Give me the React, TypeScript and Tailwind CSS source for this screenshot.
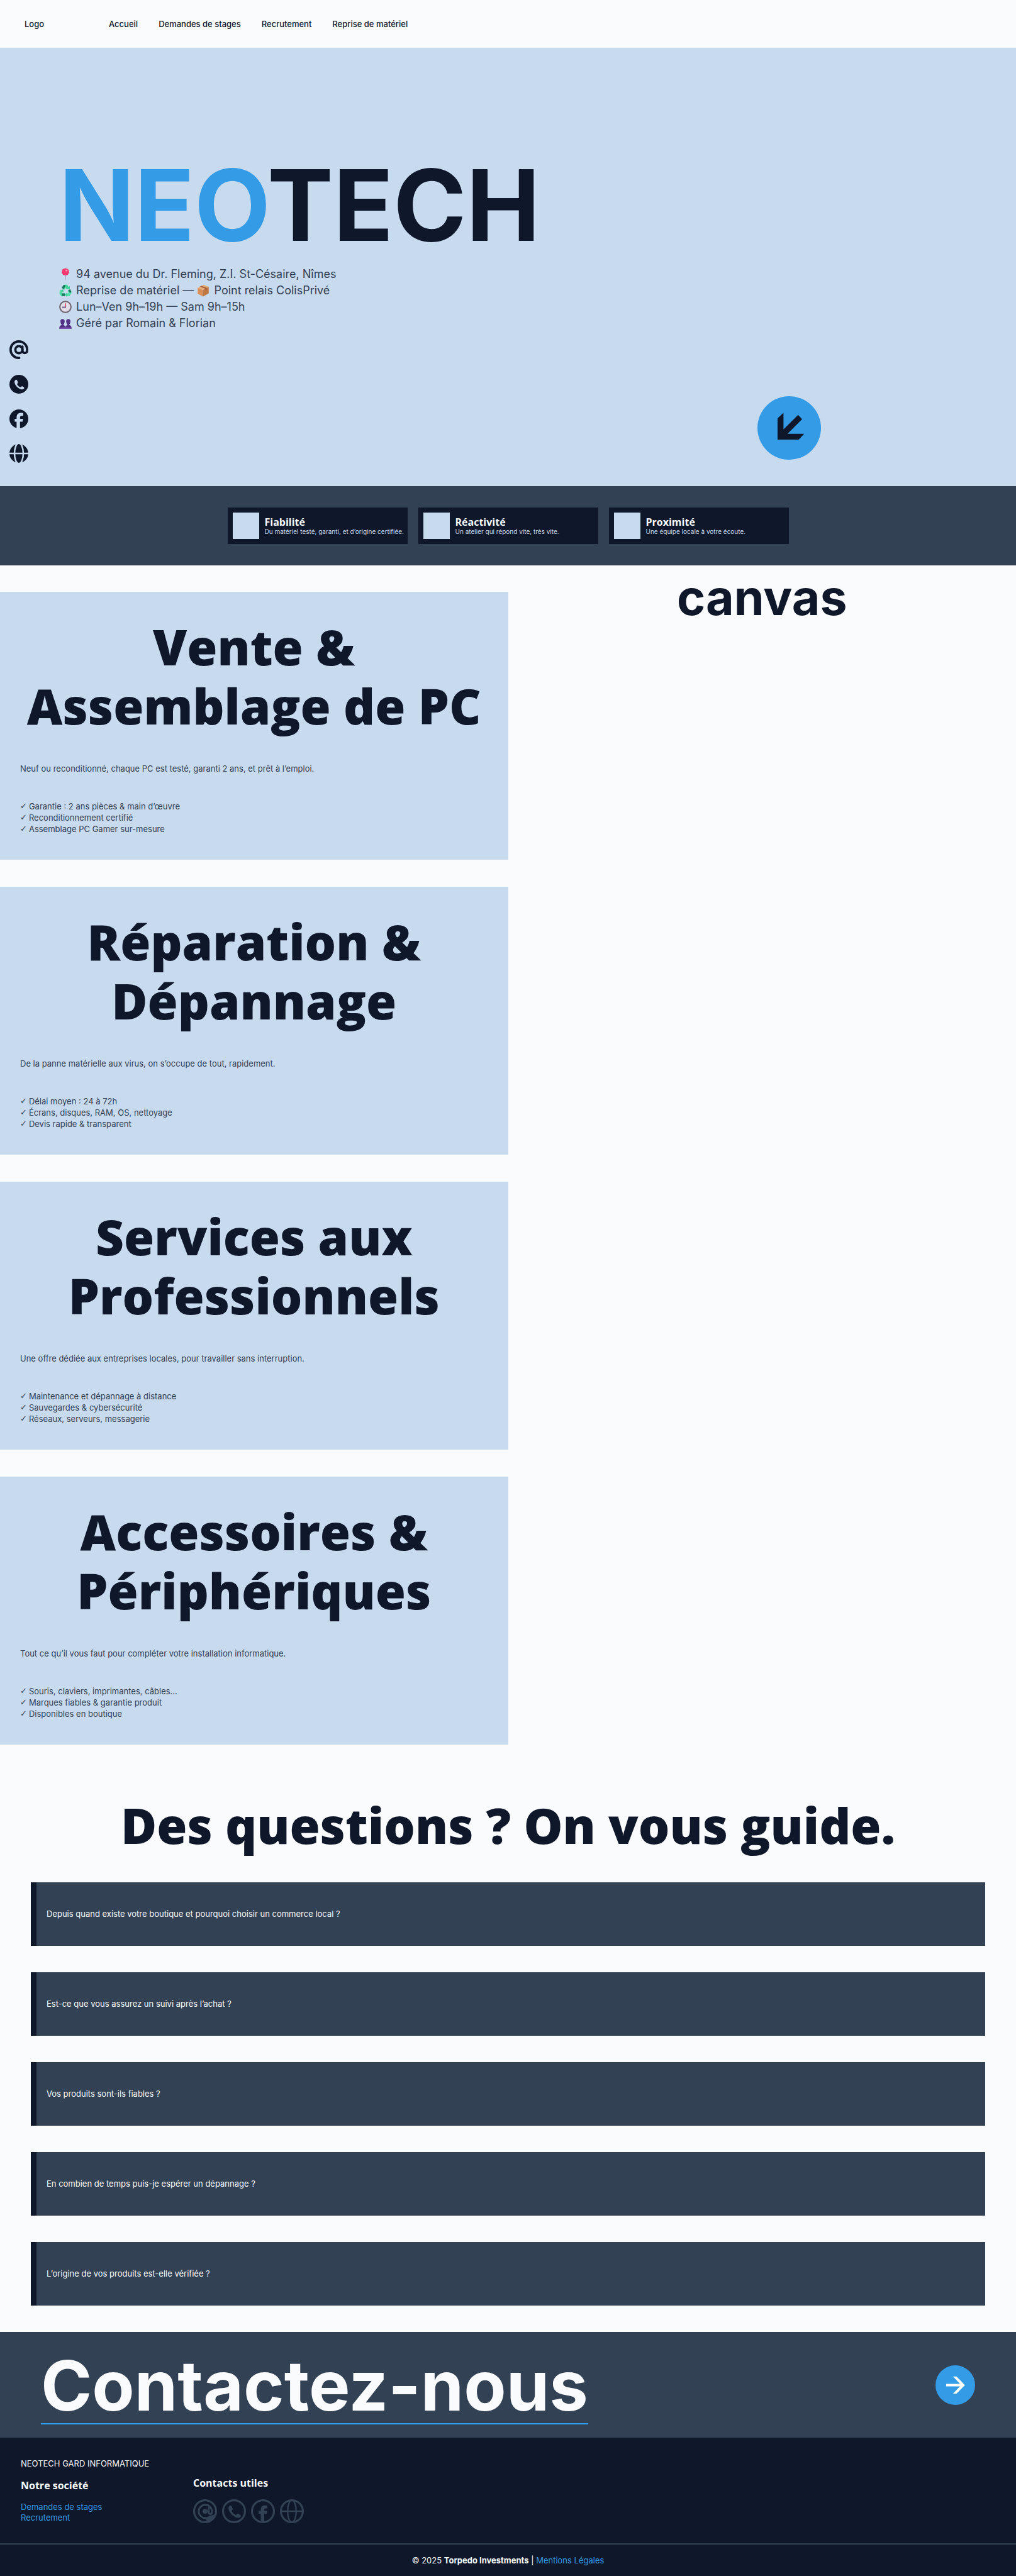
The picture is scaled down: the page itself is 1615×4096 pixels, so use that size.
import React from "react";
import { FaFacebook } from "react-icons/fa6";

const HANDSET =
  "M7.6 6.5c.9-.5 1.9-.1 2.3.9l.7 1.7c.3.8 0 1.4-.5 1.9-.5.6-.4 1.1 0 1.7.8 1.2 1.9 2.2 3.2 2.8.6.3 1.1.2 1.5-.3.5-.6 1.2-.8 2-.4l1.2.7c.9.5 1 1.6.3 2.3-1.2 1.1-3 1.1-4.9.2-3.2-1.5-5.6-4.1-6.7-7.4-.5-1.7-.3-3.2.9-4.1z";

/* ---------- solid contact icons (hero) ---------- */

function AtSolid() {
  return (
    <svg viewBox="0 0 24 24" className="size-full" fill="none" stroke="currentColor" strokeWidth="3" strokeLinecap="round" strokeLinejoin="round">
      <circle cx="12" cy="12" r="4.5" />
      <path d="M16.5 8v5.2a3 3 0 0 0 6 0V12A10.5 10.5 0 1 0 12.4 22.5" />
    </svg>
  );
}

function PhoneSolid() {
  return (
    <svg viewBox="0 0 24 24" className="size-full">
      <circle cx="12" cy="12" r="12" fill="currentColor" />
      <path d={HANDSET} fill="#c8daee" />
    </svg>
  );
}

function GlobeSolid() {
  return (
    <svg viewBox="0 0 24 24" className="size-full">
      <circle cx="12" cy="12" r="12" fill="currentColor" />
      <g fill="none" stroke="#c8daee" strokeWidth="2">
        <path d="M0 12h24" />
        <ellipse cx="12" cy="12" rx="5.6" ry="13" />
      </g>
    </svg>
  );
}

/* ---------- outlined contact icons (footer) ---------- */

function AtOutline() {
  return (
    <svg viewBox="0 0 24 24" className="size-full" fill="none" stroke="currentColor" strokeLinecap="round">
      <circle cx="12" cy="12" r="11" strokeWidth="2" />
      <circle cx="12" cy="12" r="2.5" fill="currentColor" stroke="none" />
      <path d="M15.6 8.6v4.6a1.6 1.6 0 0 0 3.2 0V12A6.6 6.6 0 1 0 12 18.8" strokeWidth="1.9" />
      <path d="M11.5 18.4c2.4.4 3.9-.9 5.3-1.6 1.6-.3 3.2-.7 4.7-1.3-1 3.900-4.200 7-8.500 7.500.7-.8 1.200-1.600.3-2.300z" fill="currentColor" strokeWidth="0.5" />
    </svg>
  );
}

function PhoneOutline() {
  return (
    <svg viewBox="0 0 24 24" className="size-full">
      <circle cx="12" cy="12" r="11" fill="none" stroke="currentColor" strokeWidth="2" />
      <path d={HANDSET} fill="currentColor" />
    </svg>
  );
}

function FacebookOutline() {
  return (
    <svg viewBox="0 0 24 24" className="size-full">
      <circle cx="12" cy="12" r="11" fill="none" stroke="currentColor" strokeWidth="2" />
      <path d="M9.800 23v-8.300H7.600v-3.200h2.200V10.200c0-2.700 1.500-4.100 4.100-4.100.9 0 1.800.1 2.600.2v2.800h-1.600c-1.200 0-1.600.6-1.600 1.500v.9h3.100l-.5 3.200h-2.600V23z" fill="currentColor" />
    </svg>
  );
}

function GlobeOutline() {
  return (
    <svg viewBox="0 0 24 24" className="size-full" fill="none" stroke="currentColor">
      <circle cx="12" cy="12" r="11" strokeWidth="2" />
      <ellipse cx="12" cy="12" rx="4.300" ry="11" strokeWidth="1.500" />
      <path d="M1 12h22" strokeWidth="1.600" />
    </svg>
  );
}

/* ---------- pictograms in the address lines ---------- */

const PICTO = "mr-0.5 inline-block size-5 align-[-4px]";

function Pin() {
  return (
    <svg viewBox="0 0 24 24" className={PICTO} role="img" aria-label="Adresse">
      <path d="M11.300 12h1.400l-.3 11.500h-.8z" fill="#9a93a8" />
      <circle cx="12" cy="7.500" r="7" fill="#f3376f" />
      <ellipse cx="14" cy="4.800" rx="2" ry="1.800" fill="#ff9dbb" />
    </svg>
  );
}

function Recycle() {
  return (
    <svg viewBox="0 0 24 24" className={PICTO} role="img" aria-label="Recyclage">
      <g strokeWidth="5" fill="none">
        <path d="M8 9l3-5.500h3l2.500 4" stroke="#3dd598" />
        <path d="M19 12l2 4-2.500 4H14" stroke="#4fe0a5" />
        <path d="M10.500 20H5l-2-3.500L5 12.500" stroke="#4fe0a5" />
      </g>
      <path d="M8 1.500l4 .2-3 8-4-2.700z M17 11l4-1.500 2.600 5-3 2z M5 17.500h6v5H5.500z" fill="#1f7a63" />
      <path d="M12.500 8.500l7.500 1 .5-6z M14.500 16v8l-3.500-4z M1 12l7-2.500.5 6z" fill="#3dd598" />
    </svg>
  );
}

function Parcel() {
  return (
    <svg viewBox="0 0 24 24" className={PICTO} role="img" aria-label="Colis">
      <path d="M1.500 6.500L13 .8l9.500 4L11.500 11z" fill="#e8ae78" />
      <path d="M1.500 6.500l10 4.500v12.500l-10-5.500z" fill="#d98f58" />
      <path d="M22.500 4.800v12.700l-11 6V11z" fill="#c07845" />
      <path d="M5.500 4.500l11 4.200v4l2.500-1.300V7L8.500 3z" fill="#a85f38" />
    </svg>
  );
}

function Clock() {
  return (
    <svg viewBox="0 0 24 24" className={PICTO} role="img" aria-label="Horaires">
      <circle cx="12" cy="12" r="10.600" fill="#e2dde8" stroke="#6e6671" strokeWidth="2.500" />
      <path d="M12.300 12.500V5" stroke="#f0335f" strokeWidth="1.700" />
      <path d="M13 12.500H6" stroke="#43306b" strokeWidth="1.700" />
    </svg>
  );
}

function People() {
  return (
    <svg viewBox="0 0 24 24" className={PICTO} role="img" aria-label="Équipe">
      <g fill="#533187">
        <path d="M2.600 9.500C2 5.800 3.800 4 6.500 4s4.500 1.800 3.900 5.500c-.3 2.300-1 3.800-1.900 4.500v1.500c2 .6 3.500 2 3.500 4.500v2.500H.5V20c0-2.500 1.700-3.900 4-4.500V14c-1-.7-1.600-2.200-1.900-4.500z" />
        <path d="M13.600 9.500C13 5.800 14.800 4 17.500 4s4.500 1.800 3.900 5.500c-.3 2.300-1 3.800-1.900 4.500v1.500c2.300.6 4 2 4 4.500v2.500H12V20c0-2.500 1.500-3.900 3.500-4.500V14c-1-.7-1.600-2.200-1.900-4.500z" />
      </g>
      <path d="M.5 22.500v-1.300c3-1.700 20-1.700 23 0v1.300z" fill="#7a4fae" />
    </svg>
  );
}

/* ---------- content ---------- */

const NAV = ["Accueil", "Demandes de stages", "Recrutement", "Reprise de matériel"];

const HERO_CONTACTS = [
  { label: "E-mail", icon: <AtSolid /> },
  { label: "Téléphone", icon: <PhoneSolid /> },
  { label: "Facebook", icon: <FaFacebook className="size-full" /> },
  { label: "Site web", icon: <GlobeSolid /> },
];

const FOOTER_CONTACTS = [
  { label: "E-mail", icon: <AtOutline /> },
  { label: "Téléphone", icon: <PhoneOutline /> },
  { label: "Facebook", icon: <FacebookOutline /> },
  { label: "Site web", icon: <GlobeOutline /> },
];

const VALUES = [
  { title: "Fiabilité", text: "Du matériel testé, garanti, et d’origine certifiée." },
  { title: "Réactivité", text: "Un atelier qui répond vite, très vite." },
  { title: "Proximité", text: "Une équipe locale à votre écoute." },
];

const SERVICES = [
  {
    title: "Vente & Assemblage de PC",
    text: "Neuf ou reconditionné, chaque PC est testé, garanti 2 ans, et prêt à l’emploi.",
    items: ["Garantie : 2 ans pièces & main d’œuvre", "Reconditionnement certifié", "Assemblage PC Gamer sur-mesure"],
  },
  {
    title: "Réparation & Dépannage",
    text: "De la panne matérielle aux virus, on s’occupe de tout, rapidement.",
    items: ["Délai moyen : 24 à 72h", "Écrans, disques, RAM, OS, nettoyage", "Devis rapide & transparent"],
  },
  {
    title: "Services aux Professionnels",
    text: "Une offre dédiée aux entreprises locales, pour travailler sans interruption.",
    items: ["Maintenance et dépannage à distance", "Sauvegardes & cybersécurité", "Réseaux, serveurs, messagerie"],
  },
  {
    title: "Accessoires & Périphériques",
    text: "Tout ce qu’il vous faut pour compléter votre installation informatique.",
    items: ["Souris, claviers, imprimantes, câbles…", "Marques fiables & garantie produit", "Disponibles en boutique"],
  },
];

const QUESTIONS = [
  "Depuis quand existe votre boutique et pourquoi choisir un commerce local ?",
  "Est-ce que vous assurez un suivi après l’achat ?",
  "Vos produits sont-ils fiables ?",
  "En combien de temps puis-je espérer un dépannage ?",
  "L’origine de vos produits est-elle vérifiée ?",
];

const HEADING = "text-center font-['Open_Sans',sans-serif] text-[78px] leading-[94px] font-extrabold";
const SMALL_HEADING = "font-['Open_Sans',sans-serif] text-base leading-5 font-bold";

export default function App() {
  return (
    <div className="bg-[#f9fbfd] font-['Inter',sans-serif] text-[13px] text-[#0f172a]">
      <header className="flex items-center px-[39px] py-7 leading-5 font-medium">
        <a href="#accueil" className="w-[134px]">Logo</a>
        <nav className="flex gap-[33px]">
          {NAV.map((n) => (
            <a key={n} href="#">{n}</a>
          ))}
        </nav>
      </header>

      <section className="relative bg-[#c8daee] px-[94px] pt-[174px] pb-[246px]">
        <h1 className="text-[157px] leading-[152px] font-bold">
          <span className="text-[#349be7]">NEO</span>TECH
        </h1>
        <div className="mt-[21px] text-lg leading-[26px] text-[#334155]">
          <p><Pin /> 94 avenue du Dr. Fleming, Z.I. St-Césaire, Nîmes</p>
          <p><Recycle /> Reprise de matériel — <Parcel /> Point relais ColisPrivé</p>
          <p><Clock /> Lun–Ven 9h–19h — Sam 9h–15h</p>
          <p><People /> Géré par Romain &amp; Florian</p>
        </div>
        <div className="absolute bottom-[37px] left-[15px] flex flex-col gap-[25px]">
          {HERO_CONTACTS.map((c) => (
            <a key={c.label} href="#" aria-label={c.label} className="size-[30px]">{c.icon}</a>
          ))}
        </div>
        <a href="#services" aria-label="Voir les services" className="absolute right-[310px] bottom-[42px] size-[101px] rounded-full bg-[#349be7]">
          <svg viewBox="0 0 120 120" className="size-full" fill="#0f172a">
            <path d="M38 42L49.200 31.300V62.700L76.700 35.300L84.500 43.300L56.900 71H88.200L78 82H38Z" />
          </svg>
        </a>
      </section>

      <section className="flex justify-center gap-[17px] bg-[#334155] py-[34px]">
        {VALUES.map((v) => (
          <article key={v.title} className="flex w-[286px] items-center gap-[9px] bg-[#0f172a] p-2">
            <div className="size-[42px] shrink-0 bg-[#c8daee]" />
            <div className="min-w-0">
              <h3 className="font-['Open_Sans',sans-serif] text-base leading-[18px] font-bold text-[#f9fbfd]">{v.title}</h3>
              <p className="text-[10px] leading-[13px] whitespace-nowrap text-[#c8daee]">{v.text}</p>
            </div>
          </article>
        ))}
      </section>

      <section id="services" className="grid grid-cols-2">
        <div className="flex flex-col gap-[43px] pt-[42px]">
          {SERVICES.map((s) => (
            <article key={s.title} className="bg-[#c8daee] px-8 pt-10 pb-10">
              <h2 className={HEADING}>{s.title}</h2>
              <p className="mt-11 leading-[18px] text-[#334155]">{s.text}</p>
              <ul className="mt-[42px] leading-[18px] text-[#334155]">
                {s.items.map((i) => (
                  <li key={i} className="flex gap-[3px]">
                    <span aria-hidden="true" className="font-['DejaVu_Sans',sans-serif] font-bold">✓</span>
                    {i}
                  </li>
                ))}
              </ul>
            </article>
          ))}
        </div>
        <div className="text-center text-[77px] leading-[102px] font-bold">canvas</div>
      </section>

      <section className="px-[49px] pt-[81px] pb-[42px]">
        <h2 className={HEADING}>Des questions ? On vous guide.</h2>
        <div className="mt-11 flex flex-col gap-[42px]">
          {QUESTIONS.map((q) => (
            <button key={q} type="button" className="w-full border-l-[9px] border-[#0f172a] bg-[#334155] py-[41px] pl-4 text-left leading-[19px] text-[#f9fbfd]">
              {q}
            </button>
          ))}
        </div>
      </section>

      <section className="flex items-center justify-between bg-[#334155] px-[65px] py-[21px]">
        <a href="#contact" className="border-b-2 border-[#349be7] pt-[9px] pb-[5px] text-[110px] leading-[110px] font-bold text-[#f9fbfd]">
          Contactez-nous
        </a>
        <a href="#contact" aria-label="Nous contacter" className="size-[63px] rounded-full bg-[#349be7]">
          <svg viewBox="0 0 75 75" className="size-full" fill="#ffffff">
            <path d="M20.200 35H46.400L33.200 21H39.800L55.700 37.400L39.800 53.700H33.200L46.400 40H20.200Z" />
          </svg>
        </a>
      </section>

      <footer className="bg-[#0f172a] text-[#f9fbfd]">
        <div className="flex items-end gap-[65px] px-[33px] pt-[33px] pb-8">
          <div className="min-w-[209px]">
            <p className="leading-[17px]">NEOTECH GARD INFORMATIQUE</p>
            <h3 className={`mt-4 ${SMALL_HEADING}`}>Notre société</h3>
            <ul className="mt-4 leading-[17px] text-[#349be7]">
              <li><a href="#">Demandes de stages</a></li>
              <li><a href="#">Recrutement</a></li>
            </ul>
          </div>
          <div>
            <h3 className={SMALL_HEADING}>Contacts utiles</h3>
            <div className="mt-4 flex gap-2 text-[#334155]">
              {FOOTER_CONTACTS.map((c) => (
                <a key={c.label} href="#" aria-label={c.label} className="size-[38px]">{c.icon}</a>
              ))}
            </div>
          </div>
        </div>
        <p className="border-t-2 border-[#334155] py-4 text-center leading-[18px]">
          © 2025 <strong className="font-bold">Torpedo Investments</strong> | <a href="#" className="text-[#349be7]">Mentions Légales</a>
        </p>
      </footer>
    </div>
  );
}
